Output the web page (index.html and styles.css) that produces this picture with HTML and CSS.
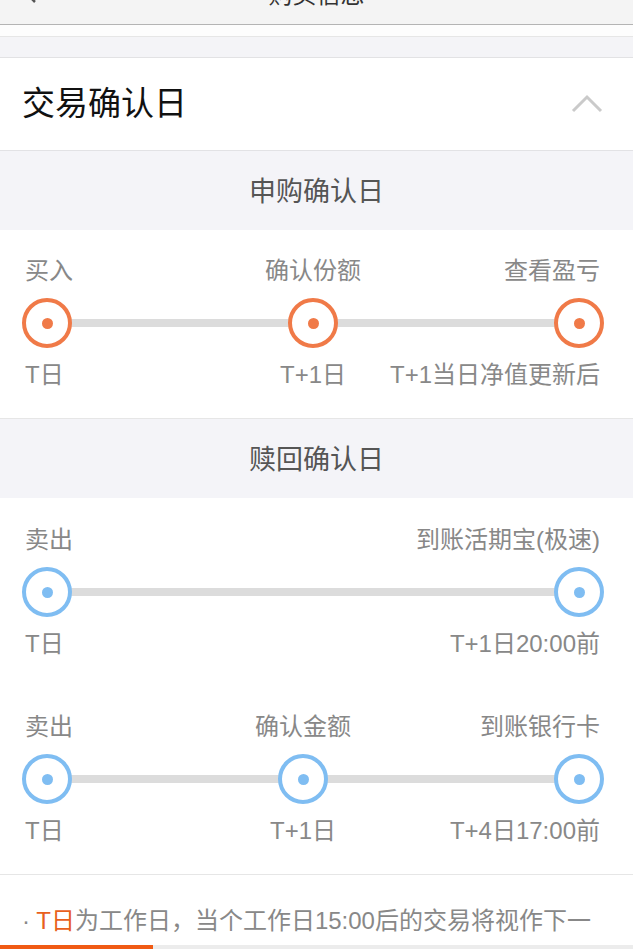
FILE: index.html
```html
<!DOCTYPE html>
<html lang="zh-CN">
<head>
  <meta charset="UTF-8">
  <title>购买信息</title>
  <link rel="stylesheet" href="styles.css">
</head>
<body>

  <!-- Barre de navigation (partiellement hors écran) -->
  <nav class="topbar">
    <svg class="back" width="16" height="24" viewBox="0 0 16 24">
      <path d="M13 2 L3 12 L13 22" fill="none" stroke="#555" stroke-width="2.5"/>
    </svg>
    <h1>购买信息</h1>
  </nav>

  <!-- Fin de la carte précédente -->
  <div class="prev-card"></div>
  <div class="gap"></div>

  <section class="panel">
    <header class="panel-head">
      <h2>交易确认日</h2>
      <svg class="arrow-up" width="32" height="20" viewBox="0 0 32 20">
        <path d="M2 17 L16 3 L30 17" fill="none" stroke="#cacaca" stroke-width="3"/>
      </svg>
    </header>

    <div class="band">申购确认日</div>
    <div class="group">
      <div class="timeline orange">
        <div class="track"></div>
        <span class="label start">买入</span>
        <span class="label mid">确认份额</span>
        <span class="label end">查看盈亏</span>
        <span class="node start"></span>
        <span class="node mid"></span>
        <span class="node end"></span>
        <span class="date start">T日</span>
        <span class="date mid">T+1日</span>
        <span class="date end">T+1当日净值更新后</span>
      </div>
    </div>

    <div class="band">赎回确认日</div>
    <div class="group">
      <div class="timeline two blue">
        <div class="track"></div>
        <span class="label start">卖出</span>
        <span class="label end">到账活期宝(极速)</span>
        <span class="node start"></span>
        <span class="node end"></span>
        <span class="date start">T日</span>
        <span class="date end">T+1日20:00前</span>
      </div>

      <div class="timeline blue shifted">
        <div class="track"></div>
        <span class="label start">卖出</span>
        <span class="label mid">确认金额</span>
        <span class="label end">到账银行卡</span>
        <span class="node start"></span>
        <span class="node mid"></span>
        <span class="node end"></span>
        <span class="date start">T日</span>
        <span class="date mid">T+1日</span>
        <span class="date end">T+4日17:00前</span>
      </div>
    </div>

    <div class="note">
      <p>· <em>T日</em>为工作日，当个工作日15:00后的交易将视作下一个工作日的交易。</p>
    </div>
  </section>

  <!-- Barre d'onglets en bas -->
  <div class="tabbar"><span class="tab-active"></span></div>

</body>
</html>
```

FILE: styles.css
```css
/* Base de la page */
body {
  margin: 0;
  height: 949px;
  overflow: hidden;
  background: #fff;
  font-family: "Liberation Sans", "Noto Sans CJK SC", sans-serif;
}

/* Barre du haut, décalée vers le haut */
.topbar {
  height: 64px;
  margin-top: -40px;
  background: #f4f4f4;
  border-bottom: 1px solid #b4b4b4;
  display: flex;
  align-items: center;
  justify-content: center;
  position: relative;
}

.topbar h1 {
  margin: 0;
  font-size: 24px;
  font-weight: normal;
  color: #333;
}

.back {
  position: absolute;
  left: 22px;
  top: 20px;
}

.prev-card {
  height: 11px;
  background: #fdfdfd;
  border-bottom: 1px solid #e6e6e6;
}

.gap {
  height: 20px;
  background: #f4f4f7;
  border-bottom: 1px solid #e2e2e4;
}

/* Titre du bloc */
.panel-head {
  height: 86px;
  padding: 0 30px 6px 22px;
  display: flex;
  align-items: center;
  justify-content: space-between;
  border-bottom: 1px solid #e2e2e5;
}

.panel-head h2 {
  margin: 0;
  font-size: 33px;
  font-weight: normal;
  color: #111;
}

.arrow-up {
  margin-top: 6px;
}

.band {
  height: 76px;
  padding-bottom: 3px;
  background: #f4f4f8;
  color: #555;
  font-size: 27px;
  display: flex;
  align-items: center;
  justify-content: center;
}

.group {
  padding: 26px 29px 28px 22px;
  border-bottom: 1px solid #e6e6e6;
}

.band + .group + .band + .group {
  padding-top: 27px;
}

/* Frise chronologique */
.timeline {
  display: grid;
  grid-template-columns: 1fr auto 1fr;
  grid-template-rows: 30px 50px 30px;
  row-gap: 12px;
}

.timeline + .timeline {
  margin-top: 53px;
}

.timeline.two {
  grid-template-columns: 1fr 1fr;
}

.label, .date {
  font-size: 24px;
  line-height: 30px;
  color: #888;
  white-space: nowrap;
}

.label { grid-row: 1; }
.node { grid-row: 2; }
.date { grid-row: 3; }

.start { grid-column: 1; justify-self: start; }
.mid { grid-column: 2; justify-self: center; }
.end { grid-column: -2; justify-self: end; }

.label.start, .date.start {
  margin-left: 3px;
}

.label.end, .date.end {
  margin-right: 4px;
}

.shifted .mid {
  margin-right: 20px;
}

.track {
  grid-row: 2;
  grid-column: 1 / -1;
  align-self: center;
  height: 8px;
  margin: 0 25px;
  background: #dcdcdc;
}

.node {
  width: 50px;
  height: 50px;
  box-sizing: border-box;
  border: 4px solid currentColor;
  border-radius: 50%;
  background: #fff;
  display: flex;
  align-items: center;
  justify-content: center;
}

.node::after {
  content: "";
  width: 11px;
  height: 11px;
  border-radius: 50%;
  background: currentColor;
}

.orange .node { color: #f07a48; }
.blue .node { color: #7fbdf2; }

/* Remarque en bas */
.note {
  padding: 26px 20px 0 22px;
}

.note p {
  margin: 0;
  font-size: 24px;
  line-height: 40px;
  color: #888;
}

.note em {
  font-style: normal;
  color: #e8601c;
}

.tabbar {
  position: fixed;
  left: 0;
  right: 0;
  bottom: 0;
  height: 4px;
  background: #ececec;
  display: flex;
}

.tab-active {
  width: 153px;
  background: #f05a14;
}
```
